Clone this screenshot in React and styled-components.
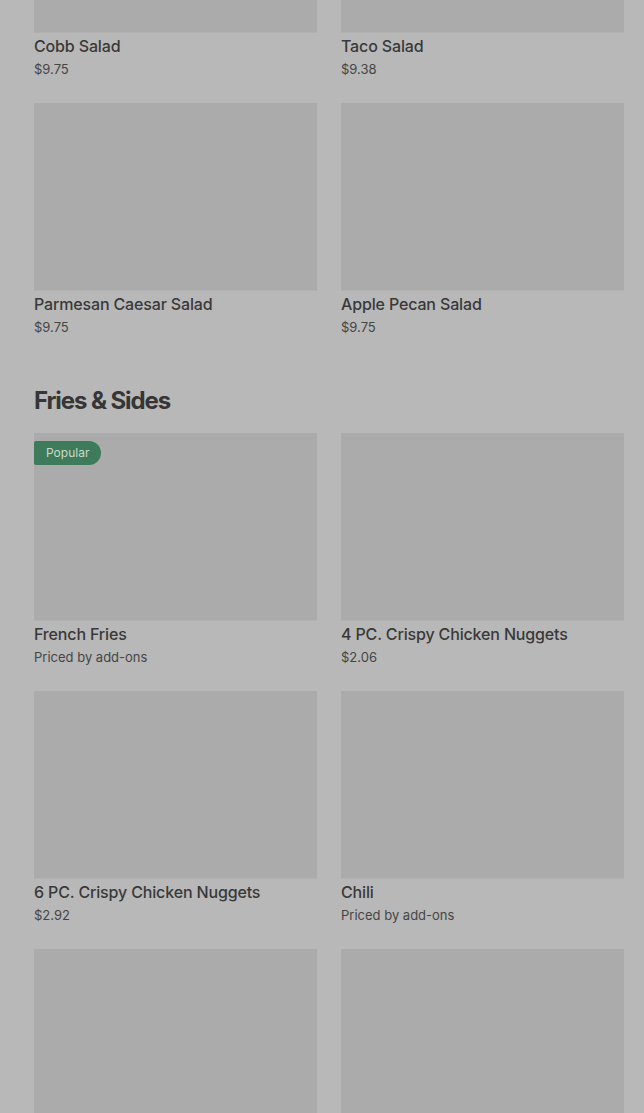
import styled, { createGlobalStyle } from "styled-components";

const GlobalStyle = createGlobalStyle`
  html, body {
    margin: 0;
    padding: 0;
    background: #b8b8b8;
    overflow: hidden;
  }
  body {
    font-family: Inter, "Liberation Sans", sans-serif;
    color: #383838;
  }
`;

const salads = [
  { name: "Cobb Salad", price: "$9.75" },
  { name: "Taco Salad", price: "$9.38" },
  { name: "Parmesan Caesar Salad", price: "$9.75" },
  { name: "Apple Pecan Salad", price: "$9.75" },
];

const sides = [
  { name: "French Fries", price: "Priced by add-ons", popular: true },
  { name: "4 PC. Crispy Chicken Nuggets", price: "$2.06" },
  { name: "6 PC. Crispy Chicken Nuggets", price: "$2.92" },
  { name: "Chili", price: "Priced by add-ons" },
  { name: "", price: "" },
  { name: "", price: "" },
];

function ItemCard({ item }) {
  return (
    <Card>
      <Photo>{item.popular && <Badge>Popular</Badge>}</Photo>
      {item.name && <ItemName>{item.name}</ItemName>}
      {item.price && <Price>{item.price}</Price>}
    </Card>
  );
}

export default function App() {
  return (
    <>
      <GlobalStyle />
      <Page>
        <Grid>
          {salads.map((s) => (
            <ItemCard key={s.name} item={s} />
          ))}
        </Grid>
        <SectionTitle>Fries &amp; Sides</SectionTitle>
        <Grid>
          {sides.map((s, i) => (
            <ItemCard key={i} item={s} />
          ))}
        </Grid>
      </Page>
    </>
  );
}

const Page = styled.div`
  padding: 0 20px 0 34px;
  margin-top: -155px;
`;

const Grid = styled.div`
  display: grid;
  grid-template-columns: 1fr 1fr;
  column-gap: 24px;
  row-gap: 24px;
`;

const Card = styled.div`
  display: flex;
  flex-direction: column;
  min-height: 234px;
`;

const Photo = styled.div`
  position: relative;
  height: 188px;
  background: #ababab;
  border-bottom: 1px solid #b1b1b1;
  box-sizing: border-box;
`;

const Badge = styled.span`
  position: absolute;
  top: 8px;
  left: 0;
  height: 24px;
  line-height: 24px;
  padding: 0 12px;
  border-radius: 2px 12px 12px 2px;
  background: #3d7b5a;
  color: #c9d9cf;
  font-size: 12px;
`;

const ItemName = styled.div`
  margin-top: 3px;
  font-size: 16px;
  line-height: 20px;
  font-weight: 500;
  letter-spacing: -0.15px;
  color: #393939;
`;

const Price = styled.div`
  margin-top: 3px;
  font-size: 13px;
  line-height: 20px;
  color: #454545;
`;

const SectionTitle = styled.h2`
  margin: 48px 0 16px;
  font-size: 24px;
  line-height: 32px;
  font-weight: 700;
  letter-spacing: -1.1px;
  color: #363636;
`;
